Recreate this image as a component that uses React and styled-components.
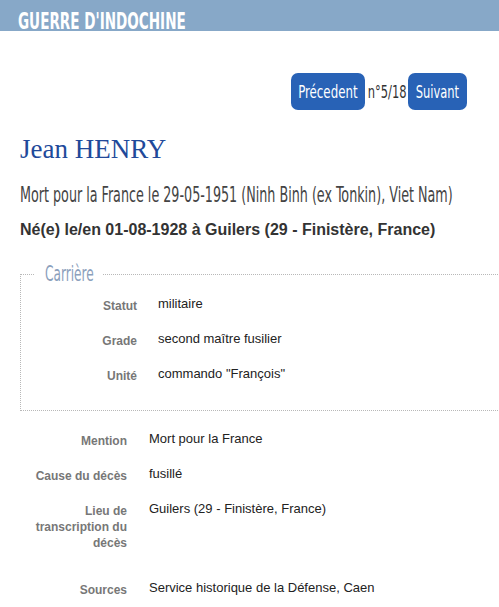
import React from "react";
import styled, { createGlobalStyle } from "styled-components";

const Global = createGlobalStyle`
  html, body { margin: 0; padding: 0; background: #fff; }
  body { font-family: "Liberation Sans", Arial, sans-serif; overflow-x: hidden; }
`;

const COND = `"DejaVu Sans Condensed", "DejaVu Sans", sans-serif`;

/* Narrow display text: the page's condensed face is emulated by squeezing DejaVu Condensed */
const Squeeze = styled.span`
  display: inline-block;
  white-space: nowrap;
  transform: scaleX(${(p) => p.$k});
  transform-origin: ${(p) => p.$origin || "left"} center;
`;

const Page = styled.div`
  width: 499px;
  overflow: hidden;
`;

const Header = styled.div`
  height: 31px;
  background: #87a8c8;
  display: flex;
  align-items: flex-end;
  padding-left: 18px;
`;

const HeaderTitle = styled.h1`
  margin: 0;
  font-family: ${COND};
  font-weight: 700;
  font-size: 23px;
  line-height: 23px;
  color: #fff;
  transform: translateY(2px);
`;

const Nav = styled.div`
  display: flex;
  justify-content: flex-end;
  align-items: center;
  margin: 42px 32px 0 0;
`;

const NavButton = styled.a`
  display: flex;
  align-items: center;
  justify-content: center;
  width: ${(p) => p.$w}px;
  height: 37px;
  border-radius: 7px;
  background: #2862b6;
  color: #fff;
  font-family: ${COND};
  font-size: 18.5px;
  text-decoration: none;
`;

const Counter = styled.span`
  display: flex;
  justify-content: center;
  width: 38px;
  margin: 0 2px 0 3px;
  font-family: ${COND};
  font-size: 18.5px;
  color: #333;
`;

const Content = styled.div`
  padding: 0 0 0 20px;
`;

const Name = styled.h2`
  margin: 23px 0 0;
  font-family: "Liberation Serif", "DejaVu Serif", serif;
  font-weight: 400;
  font-size: 27px;
  line-height: 32px;
  color: #21499a;
`;

const Death = styled.p`
  margin: 17px 0 0;
  font-family: ${COND};
  font-size: 20.5px;
  line-height: 26px;
  color: #444;
`;

const Birth = styled.p`
  margin: 12px 0 0;
  font-weight: 700;
  font-size: 16px;
  line-height: 20px;
  color: #333;
`;

const Fieldset = styled.fieldset`
  margin: 22px 0 0;
  width: 520px;
  padding: 10px 0 26px;
  border: 1px dotted #b8b8b8;
  border-right: none;
  box-sizing: border-box;
`;

const Legend = styled.legend`
  margin-left: 14px;
  width: 67px;
  box-sizing: border-box;
  padding: 0 10px;
  font-family: ${COND};
  font-size: 20.5px;
  line-height: 24px;
  color: #8ba0bc;
`;

const Grid = styled.dl`
  display: grid;
  grid-template-columns: ${(p) => p.$label}px 1fr;
  column-gap: ${(p) => p.$gap}px;
  row-gap: 17px;
  margin: 0;
`;

const Label = styled.dt`
  text-align: right;
  font-weight: 700;
  font-size: 12px;
  line-height: 16px;
  padding-top: 2px;
  color: #777;
  padding-bottom: ${(p) => (p.$extra ? 12 : 0)}px;
`;

const Value = styled.dd`
  margin: 0;
  font-size: 13px;
  line-height: 16px;
  color: #222;
`;

const Details = styled.div`
  margin-top: 20px;
`;

const career = [
  ["Statut", "militaire"],
  ["Grade", "second maître fusilier"],
  ["Unité", 'commando "François"'],
];

const details = [
  ["Mention", "Mort pour la France"],
  ["Cause du décès", "fusillé"],
  ["Lieu de transcription du décès", "Guilers (29 - Finistère, France)", true],
  ["Sources", "Service historique de la Défense, Caen"],
];

export default function App() {
  return (
    <Page>
      <Global />
      <Header>
        <HeaderTitle>
          <Squeeze $k={0.655}>GUERRE D'INDOCHINE</Squeeze>
        </HeaderTitle>
      </Header>
      <Nav>
        <NavButton href="#" $w={74}>
          <Squeeze $k={0.71} $origin="center">Précedent</Squeeze>
        </NavButton>
        <Counter>
          <Squeeze $k={0.69} $origin="center">n°5/18</Squeeze>
        </Counter>
        <NavButton href="#" $w={59}>
          <Squeeze $k={0.69} $origin="center">Suivant</Squeeze>
        </NavButton>
      </Nav>
      <Content>
        <Name>Jean HENRY</Name>
        <Death>
          <Squeeze $k={0.69}>Mort pour la France le 29-05-1951 (Ninh Binh (ex Tonkin), Viet Nam)</Squeeze>
        </Death>
        <Birth>Né(e) le/en 01-08-1928 à Guilers (29 - Finistère, France)</Birth>
        <Fieldset>
          <Legend>
            <Squeeze $k={0.66}>Carrière</Squeeze>
          </Legend>
          <Grid $label={116} $gap={21}>
            {career.map(([l, v]) => (
              <React.Fragment key={l}>
                <Label>{l}</Label>
                <Value>{v}</Value>
              </React.Fragment>
            ))}
          </Grid>
        </Fieldset>
        <Details>
          <Grid $label={107} $gap={22}>
            {details.map(([l, v, extra]) => (
              <React.Fragment key={l}>
                <Label $extra={extra}>{l}</Label>
                <Value>{v}</Value>
              </React.Fragment>
            ))}
          </Grid>
        </Details>
      </Content>
    </Page>
  );
}
